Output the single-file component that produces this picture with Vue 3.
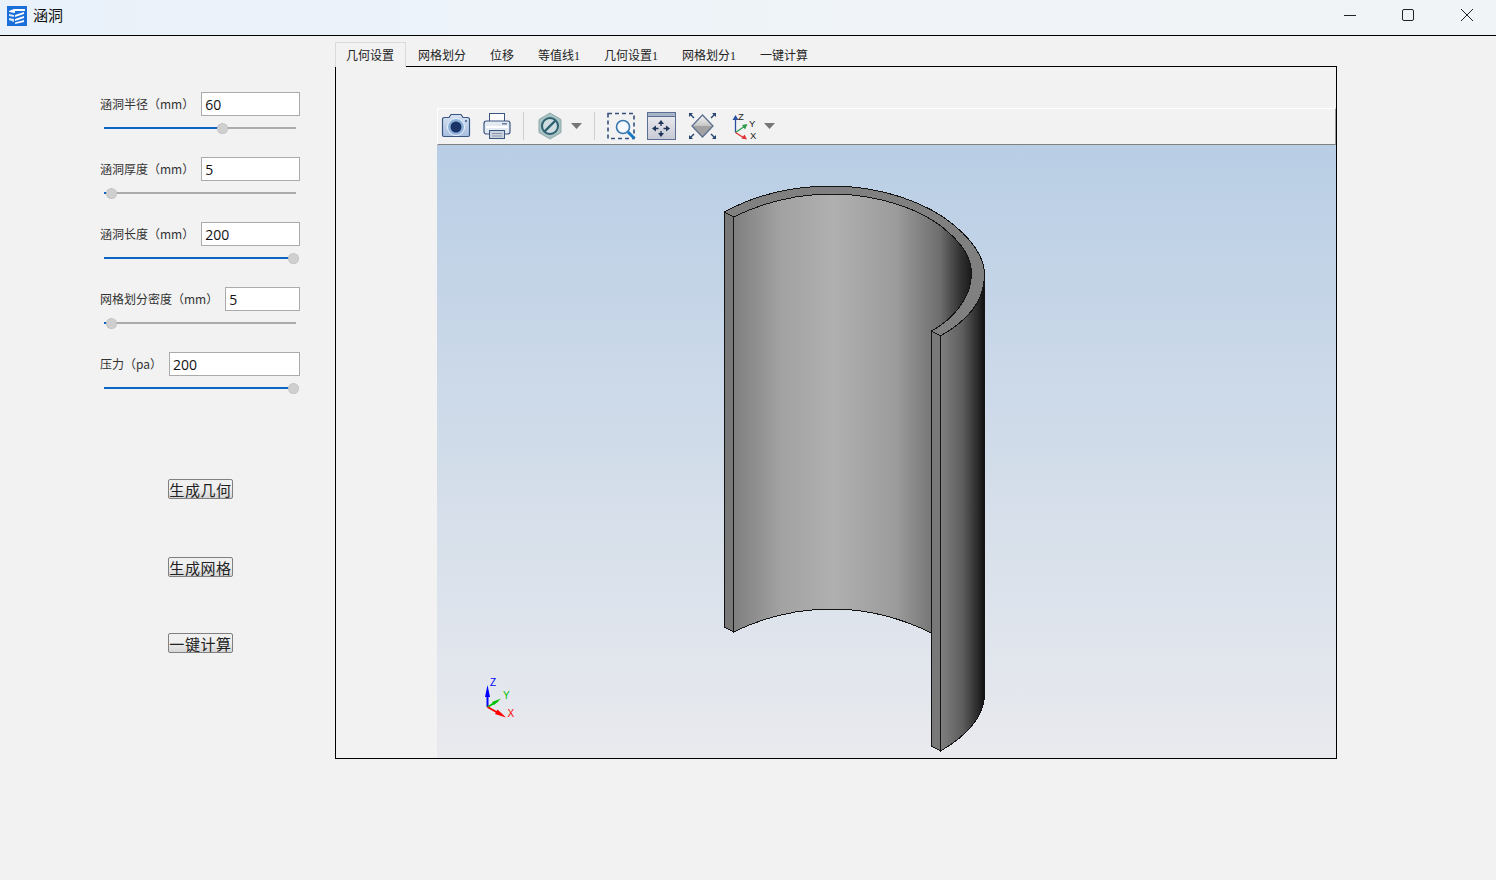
<script setup>
const params = [
  { label: '涵洞半径（mm）', value: '60', frac: 0.61 },
  { label: '涵洞厚度（mm）', value: '5', frac: 0 },
  { label: '涵洞长度（mm）', value: '200', frac: 1 },
  { label: '网格划分密度（mm）', value: '5', frac: 0 },
  { label: '压力（pa）', value: '200', frac: 1 }
]

const tabs = ['几何设置', '网格划分', '位移', '等值线1', '几何设置1', '网格划分1', '一键计算']

// track is 192px wide, handle travels from 7 to 189
function handlePos(frac) {
  return 7 + frac * 182 + 'px'
}
</script>

<template>
  <div class="window">
    <header class="titlebar">
      <svg class="app-icon" width="20" height="20" viewBox="0 0 20 20">
        <rect width="20" height="20" fill="#1a6fdb" />
        <path d="M2 5 L7 3 L18 3 L18 5 L8 5 L8 7 L2 6 Z" fill="#fff" />
        <path d="M2 8 L7 9 L7 11 L2 10 Z M2 12 L7 13 L7 16 L2 14 Z" fill="#dbe8fa" />
        <path d="M8 9 L17 6 L17 8 L8 11 Z M8 13 L17 10 L17 12 L8 15 Z M8 16.5 L17 14 L17 16 L8 18 Z" fill="#fff" />
      </svg>
      <span class="app-title">涵洞</span>
      <div class="win-controls">
        <svg width="14" height="14" viewBox="0 0 14 14"><path d="M2 7.5H14" stroke="#222" fill="none" /></svg>
        <svg width="14" height="14" viewBox="0 0 14 14"><rect x="1.5" y="1.5" width="11" height="11" rx="1.5" stroke="#222" fill="none" /></svg>
        <svg width="14" height="14" viewBox="0 0 14 14"><path d="M1 1L13 13M13 1L1 13" stroke="#222" fill="none" /></svg>
      </div>
    </header>

    <div class="main">
      <aside class="side">
        <div v-for="p in params" :key="p.label" class="param">
          <div class="param-head">
            <label class="param-label">{{ p.label }}</label>
            <input class="param-input" :value="p.value" />
          </div>
          <div class="slider">
            <div class="slider-fill" :style="{ width: handlePos(p.frac) }"></div>
            <div class="slider-handle" :style="{ left: handlePos(p.frac) }"></div>
          </div>
        </div>
        <button class="act act-1">生成几何</button>
        <button class="act act-2">生成网格</button>
        <button class="act act-3">一键计算</button>
      </aside>

      <section class="content">
        <nav class="tabs">
          <div v-for="(t, i) in tabs" :key="t" class="tab" :class="{ active: i === 0 }">{{ t }}</div>
        </nav>
        <div class="panel">
          <div class="viewer">
            <div class="toolbar">
              <svg class="tool" width="30" height="28" viewBox="0 0 30 28">
                <defs>
                  <linearGradient id="camBody" x1="0" y1="0" x2="0" y2="1">
                    <stop offset="0" stop-color="#d6e2f2" />
                    <stop offset="1" stop-color="#a9bfdf" />
                  </linearGradient>
                </defs>
                <path d="M1.5 7.5 Q1.5 5.5 3.5 5.5 H8 L10 2.5 H20 L22 5.5 H26.5 Q28.5 5.5 28.5 7.5 V23 Q28.5 24.5 27 24.5 H3 Q1.5 24.5 1.5 23 Z" fill="url(#camBody)" stroke="#3c5682" stroke-width="1.2" />
                <circle cx="15" cy="15" r="8.5" fill="#8fb0d8" stroke="#eef3fa" />
                <circle cx="15" cy="15" r="5.5" fill="#1a3468" />
                <circle cx="25" cy="9" r="1" fill="#3c5682" />
              </svg>
              <svg class="tool t-print" width="28" height="28" viewBox="0 0 28 28">
                <rect x="6.5" y="1.5" width="15" height="9" fill="#fdfdfe" stroke="#3c5682" />
                <rect x="1" y="9" width="26" height="13" rx="2.5" fill="#e4eaf2" stroke="#3c5682" stroke-width="1.2" />
                <rect x="3" y="14" width="22" height="2" fill="#fff" />
                <rect x="19" y="11" width="5" height="1.5" fill="#6a7f9f" />
                <rect x="6.5" y="18.5" width="15" height="8" fill="#cbd3df" stroke="#3c5682" />
                <path d="M9 21.5H19M9 24H19" stroke="#8c9ab0" />
              </svg>
              <div class="sep s-1"></div>
              <svg class="tool t-noop" width="24" height="28" viewBox="0 0 24 28">
                <path d="M12 1 L23 7.5 V20.5 L12 27 L1 20.5 V7.5 Z" fill="#a9c2c4" stroke="#8fa9ab" />
                <circle cx="12" cy="14" r="8" fill="#cfdde0" stroke="#2d6070" stroke-width="2" />
                <path d="M6.5 19.5L17.5 8.5" stroke="#2d6070" stroke-width="2.4" />
              </svg>
              <svg class="caret c-1" width="11" height="6" viewBox="0 0 11 6"><path d="M0 0H11L5.5 6Z" fill="#777" /></svg>
              <div class="sep s-2"></div>
              <svg class="tool t-zoom" width="29" height="28" viewBox="0 0 29 28">
                <rect x="1" y="1.5" width="26" height="25" fill="none" stroke="#34507c" stroke-width="1.6" stroke-dasharray="4 3" />
                <circle cx="16" cy="15" r="6.5" fill="#f6fafe" stroke="#3b78b0" stroke-width="1.6" />
                <path d="M21 20L27.5 26.5" stroke="#1c78c0" stroke-width="3" />
              </svg>
              <svg class="tool t-fit" width="29" height="28" viewBox="0 0 29 28">
                <defs>
                  <linearGradient id="fitBg" x1="0" y1="0" x2="0" y2="1">
                    <stop offset="0" stop-color="#eeeef1" />
                    <stop offset="1" stop-color="#c6c9d5" />
                  </linearGradient>
                </defs>
                <rect x="0.5" y="0.5" width="28" height="27" fill="url(#fitBg)" stroke="#5a6f92" />
                <rect x="1" y="1" width="27" height="3.5" fill="#a8b4c8" />
                <path d="M1 4.5H28" stroke="#5a6f92" />
                <path d="M14 11V14M14 19V22M8 16.5H11.5M16.5 16.5H20" stroke="#1e3558" stroke-width="1.4" />
                <path d="M14 8L11 12H17ZM14 25L11 21H17ZM5 16.5L9 13.5V19.5ZM23 16.5L19 13.5V19.5Z" fill="#1e3558" />
              </svg>
              <svg class="tool t-iso" width="29" height="28" viewBox="0 0 29 28">
                <defs>
                  <linearGradient id="isoTop" x1="0" y1="0" x2="0" y2="1">
                    <stop offset="0" stop-color="#f8f8f8" />
                    <stop offset="1" stop-color="#c4c4c4" />
                  </linearGradient>
                </defs>
                <path d="M14.5 3L25 14H4Z" fill="url(#isoTop)" />
                <path d="M4 14H25L14.5 25Z" fill="#a2a2a2" />
                <path d="M14.5 3L25 14L14.5 25L4 14Z" fill="none" stroke="#5d6f8f" stroke-width="1.3" />
                <g stroke="#26426e" stroke-width="1.4" fill="#26426e">
                  <path d="M2 2L6 6M27 2L23 6M2 26L6 22M27 26L23 22" />
                  <path d="M1 1H5L1 5ZM28 1H24L28 5ZM1 27H5L1 23ZM28 27H24L28 23Z" stroke="none" />
                </g>
              </svg>
              <svg class="tool t-axis" width="26" height="28" viewBox="0 0 26 28">
                <path d="M4.5 20.5V5" stroke="#2a4fa0" stroke-width="1.3" />
                <path d="M4.5 3L1.5 8H7.5Z" fill="#2a4fa0" />
                <path d="M4.5 20.5L14 14" stroke="#2c9a4c" stroke-width="1.3" />
                <path d="M16.5 12L11 13L14 17.5Z" fill="#2c9a4c" />
                <path d="M4.5 20.5L13 26" stroke="#e03030" stroke-width="1.3" />
                <path d="M16 27.5L10.5 26.5L13.5 22.5Z" fill="#e03030" />
                <text x="7" y="7.5" class="axis-t">Z</text>
                <text x="18" y="14.5" class="axis-t">Y</text>
                <text x="19" y="26.5" class="axis-t">X</text>
              </svg>
              <svg class="caret c-2" width="11" height="6" viewBox="0 0 11 6"><path d="M0 0H11L5.5 6Z" fill="#777" /></svg>
            </div>

            <svg class="scene" width="899" height="613" viewBox="437 145 899 613">
              <defs>
                <linearGradient id="sky" x1="0" y1="0" x2="0" y2="1">
                  <stop offset="0" stop-color="#b9cee5" />
                  <stop offset="1" stop-color="#e9eaee" />
                </linearGradient>
                <linearGradient id="inner" gradientUnits="userSpaceOnUse" x1="733" y1="0" x2="972" y2="0">
                  <stop offset="0" stop-color="#7e7e7e" />
                  <stop offset="0.2" stop-color="#a2a2a2" />
                  <stop offset="0.42" stop-color="#b0b0b0" />
                  <stop offset="0.68" stop-color="#9c9c9c" />
                  <stop offset="0.866" stop-color="#6e6e6e" />
                  <stop offset="0.95" stop-color="#333" />
                  <stop offset="1" stop-color="#181818" />
                </linearGradient>
                <linearGradient id="outer" gradientUnits="userSpaceOnUse" x1="940" y1="0" x2="985" y2="0">
                  <stop offset="0" stop-color="#808080" />
                  <stop offset="0.5" stop-color="#5e5e5e" />
                  <stop offset="0.85" stop-color="#282828" />
                  <stop offset="1" stop-color="#0e0e0e" />
                </linearGradient>
              </defs>
              <rect x="437" y="145" width="899" height="613" fill="url(#sky)" />
              <g shape-rendering="crispEdges" stroke="#141414" stroke-width="1" stroke-linejoin="miter">
                <!-- outer face of the right part -->
                <path d="M940.5 336 C 966 321 984.5 302 984.5 270 V695 C 984.5 717 965 737 940.5 751 Z" fill="url(#outer)" />
                <!-- inner face -->
                <path d="M733.5 217 C 762 203 797 194 832 194 C 877 194 923 209 948 232 C 964 246 971 258 971.5 274 C 971.5 298 952 320 931.5 331 V633 C 901 618 866 609 832 609 C 797 609 762 618 733.5 632 Z" fill="url(#inner)" />
                <!-- rim -->
                <path d="M724.5 212 C 755 195 793 186 832 186 C 880 186 927 202 955 226 C 974 242 984.5 258 984.5 275 C 984.5 303 966 321 940.5 336 L931.5 331 C 952 320 971.5 298 971.5 274 C 971 258 964 246 948 232 C 923 209 877 194 832 194 C 797 194 762 203 733.5 217 Z" fill="#808080" />
                <!-- cut faces -->
                <path d="M724.5 212 L733.5 217 V632 L724.5 627 Z" fill="#787878" />
                <path d="M931.5 331 L940.5 336 V751 L931.5 746 Z" fill="#787878" />
              </g>
              <path d="M487.5 707V692" stroke="#0000ff" stroke-width="2" />
              <path d="M487.5 685L485 697H490Z" fill="#0000ff" />
              <path d="M487.5 707L498 701" stroke="#00c000" stroke-width="2" />
              <path d="M501 698.5L492 702L494 705Z" fill="#00c000" />
              <path d="M487.5 707L500 714" stroke="#ff0000" stroke-width="2" />
              <path d="M506 717.5L495 714L497.5 709.5Z" fill="#ff0000" />
              <text x="490" y="686" class="tri" fill="#0000ff">Z</text>
              <text x="503" y="699" class="tri" fill="#00c000">Y</text>
              <text x="507.5" y="717" class="tri" fill="#ff0000">X</text>
            </svg>
          </div>
        </div>
      </section>
    </div>
  </div>
</template>

<style>
body {
  background: #f2f2f2;
}
</style>

<style scoped>
.window {
  width: 1496px;
  height: 880px;
  overflow: hidden;
  background: #f2f2f2;
  font-family: "Noto Sans CJK SC", "Noto Sans", sans-serif;
  color: #111;
}

/* --- title bar --- */
.titlebar {
  height: 35px;
  border-bottom: 1px solid #000;
  background: linear-gradient(90deg, #e9f1fa 0%, #eef3f9 40%, #f1f4f6 100%);
  display: flex;
  align-items: center;
  padding-left: 7px;
}

.app-icon {
  margin-top: -3px;
}

.app-title {
  margin-left: 6px;
  font-size: 15px;
  line-height: 20px;
  margin-top: -5px;
}

.win-controls {
  margin-left: auto;
  margin-right: 22px;
  display: flex;
  gap: 45px;
  margin-top: -5px;
}

.main {
  display: flex;
}

/* --- left column --- */
.side {
  width: 335px;
  padding: 56px 35px 0 100px;
  box-sizing: border-box;
  display: flex;
  flex-direction: column;
}

.param {
  height: 65px;
}

.param-head {
  display: flex;
  align-items: center;
  justify-content: space-between;
  height: 24px;
}

.param-label {
  font-size: 12px;
  color: #333;
  white-space: nowrap;
  padding-bottom: 2px;
}

.param-input {
  flex: 1;
  min-width: 0;
  margin-left: 7px;
  height: 24px;
  box-sizing: border-box;
  border: 1px solid #ababab;
  background: #fff;
  padding: 0 3px;
  font-family: "Open Sans", sans-serif;
  font-size: 14px;
  color: #111;
  outline: none;
}

.slider {
  position: relative;
  width: 192px;
  height: 2px;
  margin: 11px 0 0 4px;
  background: #ababab;
}

.slider-fill {
  height: 100%;
  background: #0a66c2;
}

.slider-handle {
  position: absolute;
  top: -4px;
  width: 11px;
  height: 11px;
  margin-left: -5.5px;
  box-sizing: border-box;
  border: 1px dotted #b8b8b8;
  border-radius: 50%;
  background: #cfcfcf;
}

.act {
  align-self: flex-start;
  margin-left: 68px;
  width: 65px;
  height: 20px;
  padding: 0;
  box-sizing: border-box;
  border: 1px solid #808080;
  border-radius: 2px;
  background: linear-gradient(#f0f0f0 0 45%, #d6d6d6 100%);
  font-family: "Noto Sans CJK SC", sans-serif;
  font-size: 15px;
  line-height: 17px;
  letter-spacing: 0.6px;
  color: #222;
}

.act-1 { margin-top: 62px; }
.act-2 { margin-top: 58px; }
.act-3 { margin-top: 56px; }

/* --- tabs and viewer --- */
.content {
  width: 1002px;
  padding-top: 6px;
}

.tabs {
  display: flex;
  height: 25px;
  position: relative;
  z-index: 1;
  font-family: "Liberation Serif", "Noto Sans CJK SC", serif;
  font-size: 12px;
}

.tab {
  padding: 0 12px;
  height: 25px;
  line-height: 28px;
  box-sizing: border-box;
  color: #222;
}

.tab.active {
  padding: 0 11px 0 10px;
  border: 1px solid #dadada;
  border-bottom: none;
  background: #f2f2f2;
  line-height: 26px;
}

.panel {
  margin-top: -1px;
  height: 693px;
  box-sizing: border-box;
  border: 1px solid #000;
  padding: 41px 0 0 101px;
}

.viewer {
  width: 899px;
}

.toolbar {
  height: 37px;
  box-sizing: border-box;
  padding-bottom: 1px;
  border-top: 1px solid #fff;
  border-left: 1px solid #fff;
  border-right: 1px solid #9a9a9a;
  border-bottom: 1px solid #808080;
  background: #f2f2f2;
  display: flex;
  align-items: center;
}

.tool {
  display: block;
  flex: none;
}

.tool:first-child { margin-left: 3px; }
.t-print { margin-left: 12px; }
.t-noop { margin-left: 0; }
.t-zoom { margin-left: 12px; }
.t-fit { margin-left: 11px; }
.t-iso { margin-left: 12px; }
.t-axis { margin-left: 14px; }

.sep {
  width: 1px;
  height: 28px;
  background: #cfcfcf;
  flex: none;
}

.s-1 { margin: 0 14px 0 12px; }
.s-2 { margin-left: 12px; }
.caret { flex: none; margin-left: 9px; }
.c-2 { margin-left: 7px; }

.axis-t {
  font-family: "Liberation Sans", sans-serif;
  font-size: 9.5px;
  fill: #222;
}

.scene {
  display: block;
}

.tri {
  font-family: "Liberation Sans", sans-serif;
  font-size: 10px;
}
</style>
